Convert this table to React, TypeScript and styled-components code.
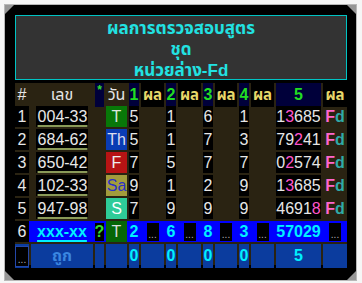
import React from "react";
import styled, { createGlobalStyle } from "styled-components";

const GlobalStyle = createGlobalStyle`
  html, body { margin: 0; padding: 0; background: #f6f6f6; }
  body { font-family: "Liberation Sans", Arial, Tahoma, "Noto Sans Thai", "Loma", "Garuda", "Noto Sans", sans-serif; }
  * { box-sizing: border-box; }
`;

const COLS = "14px 62px 9px 21px 10px 23px 10px 23px 10px 22px 10px 23px 45px 24px";

const Frame = styled.div`
  margin: 4px;
  width: 353px;
  height: 277px;
  border: 1px solid #b8b8b8;
  background: #969696;
`;

const Panel = styled.div`
  height: 100%;
  background: #000;
  padding: 10px 9px 0 10px;
  clip-path: polygon(9px 0, calc(100% - 9px) 0, 100% 9px, 100% calc(100% - 9px), calc(100% - 9px) 100%, 9px 100%, 0 calc(100% - 9px), 0 9px);
`;

const TitleBox = styled.div`
  border: 1px solid #00c4c4;
  background: #333;
  color: #22e2e2;
  font-weight: bold;
  font-size: 17px;
  height: 65px;
  padding-top: 2px;
  display: flex;
  flex-direction: column;
`;

const TitleLine = styled.div`
  height: 21px;
  line-height: 21px;
  text-align: center;
  flex: none;
`;

const Table = styled.div`
  margin-top: 3px;
  background: #2a2312;
  display: flex;
  flex-direction: column;
  gap: 2px;
`;

const Row = styled.div<{ $bg?: string; $h?: number }>`
  display: grid;
  grid-template-columns: ${COLS};
  column-gap: 2px;
  height: ${(p) => p.$h ?? 21}px;
  background: ${(p) => p.$bg ?? "transparent"};
`;

const Cell = styled.div<{
  $bg?: string;
  $color?: string;
  $bold?: boolean;
  $size?: number;
  $align?: string;
}>`
  display: flex;
  align-items: ${(p) => p.$align ?? "center"};
  justify-content: center;
  background: ${(p) => p.$bg ?? "transparent"};
  color: ${(p) => p.$color ?? "#e6e6e6"};
  font-weight: ${(p) => (p.$bold ? "bold" : "normal")};
  font-size: ${(p) => p.$size ?? 16}px;
  white-space: nowrap;
  overflow: visible;
`;

const CodeBox = styled.span`
  display: flex;
  align-items: center;
  height: 100%;
  padding: 0 1px 0 2px;
  background: #000;
  color: #e8e8e8;
  text-decoration: underline;
  text-decoration-color: #8a9a58;
  text-decoration-thickness: 2px;
  text-underline-offset: 3px;
`;

const CyanCode = styled.span`
  color: #00f0ff;
  font-weight: bold;
  text-decoration: underline;
  text-decoration-thickness: 2px;
  text-underline-offset: 3px;
`;

const DotBox = styled.span<{ $w?: number; $border?: boolean }>`
  display: flex;
  align-items: flex-end;
  justify-content: center;
  width: ${(p) => p.$w ?? 12}px;
  height: ${(p) => (p.$border ? 21 : 18)}px;
  background: #000;
  color: #b0b0b0;
  font-size: 10px;
  line-height: 12px;
  font-weight: normal;
  border: ${(p) => (p.$border ? "1px solid #2447a8" : "none")};
`;

const QBox = styled.span`
  display: flex;
  align-items: center;
  justify-content: center;
  width: 9px;
  height: 18px;
  background: #000;
  color: #33dd33;
  font-weight: bold;
  font-size: 16px;
`;

const Hi = styled.span`
  color: #ff55cc;
`;

const FdF = styled.span`
  color: #ff66cc;
`;
const FdD = styled.span`
  color: #2faaa8;
`;

const Star = styled.span`
  font-size: 12px;
  color: #33dd33;
  font-weight: bold;
  line-height: 12px;
  margin-top: 1px;
`;

const rows = [
  { n: "1", code: "004-33", day: "T", dayBg: "#087808", dayColor: "#dde8dd", v: ["5", "1", "6", "1"], five: "13685", hi: 1 },
  { n: "2", code: "684-62", day: "Th", dayBg: "#0a3cb4", dayColor: "#dde", v: ["5", "1", "7", "3"], five: "79241", hi: 2 },
  { n: "3", code: "650-42", day: "F", dayBg: "#b81414", dayColor: "#eee", v: ["7", "5", "7", "7"], five: "02574", hi: 1 },
  { n: "4", code: "102-33", day: "Sa", dayBg: "#a29c3c", dayColor: "#2a30c8", v: ["9", "1", "2", "9"], five: "13685", hi: 1 },
  { n: "5", code: "947-98", day: "S", dayBg: "#2ecc98", dayColor: "#ffffff", v: ["7", "9", "9", "9"], five: "46918", hi: 4 },
];

const Five: React.FC<{ s: string; hi: number }> = ({ s, hi }) => (
  <>
    {s.split("").map((c, i) => (i === hi ? <Hi key={i}>{c}</Hi> : <span key={i}>{c}</span>))}
  </>
);

const Y = "#e8d86a";
const G = "#22dd22";
const NAVY = "#00003a";
const BLUE = "#0000ff";
const DKBLUE = "#0b3c9e";
const CY = "#00f0ff";

export default function App() {
  return (
    <>
      <GlobalStyle />
      <Frame>
        <Panel>
          <TitleBox>
            <TitleLine>ผลการตรวจสอบสูตร</TitleLine>
            <TitleLine>ชุด</TitleLine>
            <TitleLine>หน่วยล่าง-Fd</TitleLine>
          </TitleBox>
          <Table>
            <Row>
              <Cell>#</Cell>
              <Cell>เลข</Cell>
              <Cell $bg={NAVY} $align="flex-start">
                <Star>*</Star>
              </Cell>
              <Cell>วัน</Cell>
              <Cell $bg={NAVY} $color={G} $bold>1</Cell>
              <Cell $bg="#000" $color={Y} $bold $size={15}>ผล</Cell>
              <Cell $bg={NAVY} $color={G} $bold>2</Cell>
              <Cell $bg="#000" $color={Y} $bold $size={15}>ผล</Cell>
              <Cell $bg={NAVY} $color={G} $bold>3</Cell>
              <Cell $bg="#000" $color={Y} $bold $size={15}>ผล</Cell>
              <Cell $bg={NAVY} $color={G} $bold>4</Cell>
              <Cell $bg="#000" $color={Y} $bold $size={15}>ผล</Cell>
              <Cell $bg={NAVY} $color={G} $bold>5</Cell>
              <Cell $bg="#000" $color={Y} $bold $size={15}>ผล</Cell>
            </Row>
            {rows.map((r) => (
              <Row key={r.n}>
                <Cell $bg="#000">{r.n}</Cell>
                <Cell>
                  <CodeBox>{r.code}</CodeBox>
                </Cell>
                <Cell />
                <Cell $bg={r.dayBg} $color={r.dayColor}>{r.day}</Cell>
                <Cell $bg="#000">{r.v[0]}</Cell>
                <Cell />
                <Cell $bg="#000">{r.v[1]}</Cell>
                <Cell />
                <Cell $bg="#000">{r.v[2]}</Cell>
                <Cell />
                <Cell $bg="#000">{r.v[3]}</Cell>
                <Cell />
                <Cell $bg="#000">
                  <Five s={r.five} hi={r.hi} />
                </Cell>
                <Cell $bold>
                  <FdF>F</FdF>
                  <FdD>d</FdD>
                </Cell>
              </Row>
            ))}
            <Row $bg={BLUE}>
              <Cell $bg="#000">6</Cell>
              <Cell>
                <CyanCode>xxx-xx</CyanCode>
              </Cell>
              <Cell>
                <QBox>?</QBox>
              </Cell>
              <Cell $bg="#066606" $color="#dddddd">T</Cell>
              <Cell $color={CY} $bold>2</Cell>
              <Cell><DotBox>...</DotBox></Cell>
              <Cell $color={CY} $bold>6</Cell>
              <Cell><DotBox>...</DotBox></Cell>
              <Cell $color={CY} $bold>8</Cell>
              <Cell><DotBox>...</DotBox></Cell>
              <Cell $color={CY} $bold>3</Cell>
              <Cell><DotBox>...</DotBox></Cell>
              <Cell $color={CY} $bold>57029</Cell>
              <Cell><DotBox>...</DotBox></Cell>
            </Row>
            <Row>
              <Cell $bg={DKBLUE}><DotBox $w={14} $border>...</DotBox></Cell>
              <Cell $bg={DKBLUE} $color="#3a86e0" $bold>ถูก</Cell>
              <Cell $bg={DKBLUE} />
              <Cell $bg={DKBLUE} />
              <Cell $bg={DKBLUE} $color={CY} $bold>0</Cell>
              <Cell $bg={DKBLUE} />
              <Cell $bg={DKBLUE} $color={CY} $bold>0</Cell>
              <Cell $bg={DKBLUE} />
              <Cell $bg={DKBLUE} $color={CY} $bold>0</Cell>
              <Cell $bg={DKBLUE} />
              <Cell $bg={DKBLUE} $color={CY} $bold>0</Cell>
              <Cell $bg={DKBLUE} />
              <Cell $bg={DKBLUE} $color={CY} $bold>5</Cell>
              <Cell $bg={DKBLUE} />
            </Row>
          </Table>
        </Panel>
      </Frame>
    </>
  );
}
